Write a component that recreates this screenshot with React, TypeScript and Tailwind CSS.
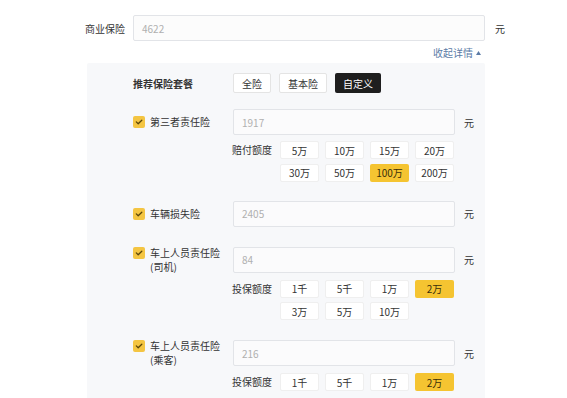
import React, { useState } from 'react';

const FONT = { fontFamily: '"Noto Sans CJK SC", "Noto Sans", sans-serif' };

interface Coverage {
  id: string;
  name: string;
  sub?: string;
  value: string;
  amountLabel?: string;
  options?: string[];
  selected?: string;
}

const COVERAGES: Coverage[] = [
  {
    id: 'third',
    name: '第三者责任险',
    value: '1917',
    amountLabel: '赔付额度',
    options: ['5万', '10万', '15万', '20万', '30万', '50万', '100万', '200万'],
    selected: '100万',
  },
  { id: 'damage', name: '车辆损失险', value: '2405' },
  {
    id: 'driver',
    name: '车上人员责任险',
    sub: '(司机)',
    value: '84',
    amountLabel: '投保额度',
    options: ['1千', '5千', '1万', '2万', '3万', '5万', '10万'],
    selected: '2万',
  },
  {
    id: 'passenger',
    name: '车上人员责任险',
    sub: '(乘客)',
    value: '216',
    amountLabel: '投保额度',
    options: ['1千', '5千', '1万', '2万'],
    selected: '2万',
  },
];

function CheckBox() {
  return (
    <span className="mt-[1px] flex h-[12px] w-[12px] shrink-0 items-center justify-center rounded-[2px] bg-[#f4c542]">
      <svg width="8" height="8" viewBox="0 0 8 8" fill="none">
        <path d="M1.3 3.9 L3.2 5.8 L6.8 2.2" stroke="#5b4608" strokeWidth="1.3" strokeLinecap="round" strokeLinejoin="round" />
      </svg>
    </span>
  );
}

function CoverageRow({ item }: { item: Coverage }) {
  const [selected, setSelected] = useState(item.selected);
  return (
    <div>
      <div className="flex items-center">
        <div className="flex w-[100px] items-start gap-[5px]">
          <CheckBox />
          <div className="text-[10px] leading-[14px] text-[#333]">
            <div>{item.name}</div>
            {item.sub && <div>{item.sub}</div>}
          </div>
        </div>
        <div className="flex h-[26px] w-[222px] items-center rounded-[2px] border border-[#e2e4e8] bg-[#fbfbfc] px-[8px] text-[10px] text-[#b0b0b0]">
          {item.value}
        </div>
        <span className="ml-[9px] text-[10px] text-[#333]">元</span>
      </div>
      {item.options && (
        <div className="ml-[99px] mt-[6px] flex items-start">
          <span className="w-[48px] pt-[2px] text-[10px] leading-[14px] text-[#333]">{item.amountLabel}</span>
          <div className="grid grid-cols-[repeat(4,39px)] gap-x-[6px] gap-y-[4.5px]">
            {item.options.map(opt => (
              <button
                key={opt}
                onClick={() => setSelected(opt)}
                className={`flex h-[18px] items-center justify-center rounded-[2px] text-[10px] ${
                  selected === opt
                    ? 'bg-[#f5c431] text-[#3a2f0a]'
                    : 'border border-[#efefef] bg-white text-[#333]'
                }`}
              >
                {opt}
              </button>
            ))}
          </div>
        </div>
      )}
    </div>
  );
}

export default function App() {
  const [plan, setPlan] = useState('自定义');
  return (
    <div className="h-[398px] w-[567px] overflow-hidden bg-white" style={FONT}>
      <div className="pl-[85px] pt-[15px]">
        {/* 商业保险 */}
        <div className="flex items-center">
          <span className="w-[48px] text-[10px] text-[#333]">商业保险</span>
          <div className="flex h-[26px] w-[352px] items-center rounded-[2px] border border-[#e2e4e8] bg-[#fcfcfc] px-[8px] text-[10px] text-[#b0b0b0]">
            4622
          </div>
          <span className="ml-[10px] text-[10px] text-[#333]">元</span>
        </div>
        <div className="flex w-[398px] items-center justify-end gap-[3px] pt-[5px] text-[10px] leading-[14px] text-[#5b7ba6]">
          <span>收起详情</span>
          <svg width="5" height="4" viewBox="0 0 5 4" className="mr-[2px]">
            <path d="M2.5 0 L5 4 L0 4 Z" fill="#5b7ba6" />
          </svg>
        </div>

        {/* 详情面板 */}
        <div className="ml-[2px] mt-[3px] h-[400px] w-[398px] rounded-t-[2px] bg-[#f7f8fa] pl-[46px] pt-[10px]">
          <div className="flex items-center">
            <span className="w-[100px] text-[10px] font-bold text-[#333]">推荐保险套餐</span>
            <div className="flex gap-[8px]">
              {['全险', '基本险', '自定义'].map(p => (
                <button
                  key={p}
                  onClick={() => setPlan(p)}
                  className={`flex h-[20px] items-center rounded-[2px] px-[8px] text-[10px] ${
                    plan === p ? 'bg-[#1e1e1e] text-white' : 'border border-[#e4e4e4] bg-white text-[#333]'
                  }`}
                >
                  {p}
                </button>
              ))}
            </div>
          </div>

          <div className="mt-[16px] flex flex-col gap-[19px]">
            {COVERAGES.map(c => (
              <CoverageRow key={c.id} item={c} />
            ))}
          </div>
        </div>
      </div>
    </div>
  );
}
